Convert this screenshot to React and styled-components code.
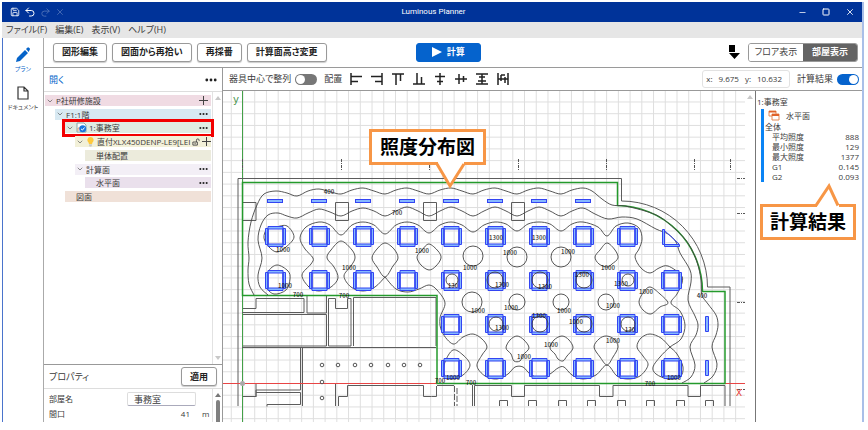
import React from "react";
import styled, { createGlobalStyle, css } from "styled-components";
import { Save, Undo2, Redo2, X, Minus, Square, ChevronDown } from "lucide-react";

const GlobalStyle = createGlobalStyle`
  * { box-sizing: border-box; }
  body {
    margin: 0;
    background: #fff;
    color: #3a3a3a;
    font-family: "Open Sans", "Noto Sans CJK JP", sans-serif;
    font-size: 9px;
    line-height: 12px;
    font-feature-settings: "palt";
  }
  button, input { font: inherit; color: inherit; font-feature-settings: inherit; }
`;

const Window = styled.div`
  display: flex;
  flex-direction: column;
  height: calc(100vh - 10px);
  margin: 2px 4px 8px 2px;
  overflow: hidden;
  border-right: 2px solid #a9bfe8;
`;

const TitleBar = styled.header`
  display: grid;
  grid-template-columns: 1fr auto 1fr;
  align-items: center;
  flex: none;
  height: 20px;
  padding: 0 4px 0 7px;
  background: #003399;
  color: #fff;
`;

const IconGroup = styled.div`
  display: flex;
  align-items: center;
  gap: ${(p) => p.$gap}px;
  justify-content: ${(p) => (p.$end ? "flex-end" : "flex-start")};
`;

const IconButton = styled.button`
  display: flex;
  align-items: center;
  justify-content: center;
  width: ${(p) => p.$w || 12}px;
  height: 14px;
  padding: 0;
  border: 0;
  background: none;
  color: inherit;
  opacity: ${(p) => (p.disabled ? 0.3 : 1)};
`;

const Title = styled.h1`
  margin: 0;
  font-family: Roboto, sans-serif;
  font-size: 8px;
  font-weight: 400;
`;

const MenuBar = styled.nav`
  display: flex;
  align-items: center;
  gap: 8px;
  flex: none;
  height: 16px;
  padding-left: 4px;
  background: #e6e6e6;
`;

const MenuItem = styled.button`
  padding: 0;
  border: 0;
  background: none;
  white-space: nowrap;
`;

const Body = styled.div`
  display: flex;
  flex: 1;
  min-height: 0;
  border-left: 1px solid #4a74cc;
`;

const Rail = styled.nav`
  display: flex;
  flex-direction: column;
  align-items: center;
  gap: 12px;
  flex: none;
  width: 40px;
  padding-top: 9px;
`;

const RailItem = styled.button`
  display: flex;
  flex-direction: column;
  align-items: center;
  gap: 3px;
  padding: 0;
  border: 0;
  background: none;
  color: ${(p) => (p.$active ? "#0563c9" : "#444")};
  font-size: 6px;
  line-height: 9px;
  white-space: nowrap;
`;

const Workspace = styled.div`
  display: flex;
  flex-direction: column;
  flex: 1;
  min-width: 0;
  border-left: 1px solid #aaa;
`;

const CommandBar = styled.div`
  display: flex;
  align-items: center;
  gap: 5px;
  flex: none;
  height: 30px;
  padding: 0 4px 1px 9px;
  border-bottom: 1px solid #9a9a9a;
`;

const Spacer = styled.div`
  flex: ${(p) => p.$grow || 1};
`;

const Button = styled.button`
  display: flex;
  align-items: center;
  justify-content: center;
  gap: 5px;
  height: 19px;
  padding: 0 8px;
  border: 1px solid #999;
  border-radius: 3px;
  background: #fff;
  box-shadow: 0 1px 1px #ccc;
  color: #222;
  font-weight: 600;
  white-space: nowrap;
  ${(p) =>
    p.$primary &&
    css`
      width: 65px;
      border-color: #0563cd;
      background: #0563cd;
      box-shadow: none;
      color: #fff;
    `}
`;

const Segments = styled.div`
  display: flex;
  height: 19px;
  margin-left: 3px;
  border: 1px solid #999;
  border-radius: 3px;
  overflow: hidden;
`;

const Segment = styled.button`
  width: 54px;
  padding: 0;
  border: 0;
  background: ${(p) => (p.$active ? "#646464" : "#fff")};
  color: ${(p) => (p.$active ? "#fff" : "#444")};
  font-weight: ${(p) => (p.$active ? 700 : 400)};
  white-space: nowrap;
`;

const Columns = styled.div`
  display: flex;
  flex: 1;
  min-height: 0;
`;

const SidePanel = styled.aside`
  display: flex;
  flex-direction: column;
  flex: none;
  width: 179px;
  border-right: 1px solid #999;
`;

const PanelHeader = styled.div`
  display: flex;
  align-items: center;
  justify-content: space-between;
  flex: none;
  height: ${(p) => p.$h}px;
  padding: 0 5px;
  border-bottom: 1px solid #ddd;
`;

const LinkButton = styled.button`
  padding: 0;
  border: 0;
  background: none;
  color: #0563c9;
`;

const Scroller = styled.div`
  display: flex;
  flex: ${(p) => (p.$grow ? 1 : "none")};
  min-height: 0;
`;

const ScrollTrack = styled.div`
  display: flex;
  flex-direction: column;
  align-items: center;
  flex: none;
  width: 10px;
  padding: 4px 0;
  border-left: ${(p) => (p.$plain ? "0" : "1px solid #e2e2e2")};
  color: ${(p) => (p.$dark ? "#777" : "#c8c8c8")};
`;

const Thumb = styled.div`
  flex: 1;
  width: 4px;
  margin: 3px 0 -4px;
  border-radius: 2px 2px 0 0;
  background: #808080;
`;

const Tree = styled.ul`
  display: grid;
  grid-template-columns: minmax(0, 1fr);
  align-content: space-between;
  flex: 1;
  min-width: 0;
  height: 107px;
  margin: 3px 1px 0;
  padding: 0;
  list-style: none;
`;

const TreeRow = styled.li`
  position: relative;
  display: flex;
  align-items: center;
  gap: 2px;
  height: 11px;
  margin-left: ${(p) => p.$depth * 10}px;
  padding: 0 3px 0 ${(p) => (p.$leaf ? 11 : 1)}px;
  background: ${(p) => p.$color};
  font-size: 8px;
  line-height: 11px;
  white-space: nowrap;
  svg { flex: none; }
`;

const TreeLabel = styled.span`
  flex: 1;
`;

const Highlight = styled.span`
  position: absolute;
  inset: -3px -3px -4px -3px;
  border: 3px solid #f20000;
`;

const Properties = styled.section`
  display: flex;
  flex-direction: column;
  flex: none;
  height: 58px;
  border-top: 1px solid #999;
`;

const Fields = styled.div`
  display: grid;
  grid-template-columns: 78px 69px 1fr;
  grid-auto-rows: 14px;
  gap: 1px 0;
  align-content: start;
  align-items: center;
  flex: 1;
  padding: 3px 0 0 5px;
  font-size: 8px;
`;

const Field = styled.input`
  width: 69px;
  height: 14px;
  padding: 0 6px;
  border: 1px solid #ddd;
  border-bottom-color: #aab;
  border-radius: 2px;
  background: #fff;
  font-size: 9px;
`;

const NumberField = styled.input`
  width: 69px;
  padding: 0 6px;
  border: 0;
  background: none;
  text-align: right;
`;

const Unit = styled.span`
  padding-left: 6px;
`;

const Main = styled.main`
  display: flex;
  flex-direction: column;
  flex: 1;
  min-width: 0;
`;

const ViewBar = styled.div`
  display: flex;
  align-items: center;
  gap: 7px;
  flex: none;
  height: 23px;
  padding: 0 3px 0 6px;
  border-bottom: 1px solid #999;
  white-space: nowrap;
`;

const SwitchLabel = styled.label`
  display: flex;
  align-items: center;
  gap: 4px;
`;

const Switch = styled.input`
  appearance: none;
  width: 22px;
  height: 11px;
  margin: 0;
  border-radius: 6px;
  background: ${(p) => (p.$on ? "#0563cd" : "#777")};
  &::after {
    content: "";
    display: block;
    width: 9px;
    height: 9px;
    margin: 1px 1px 1px ${(p) => (p.$on ? 12 : 1)}px;
    border-radius: 50%;
    background: #fff;
  }
`;

const AlignTools = styled.div`
  display: flex;
  gap: 9px;
  padding-left: 1px;
`;

const Coordinates = styled.output`
  display: flex;
  align-items: center;
  justify-content: flex-end;
  gap: 6px;
  width: 88px;
  height: 18px;
  padding: 0 7px;
  border: 1px solid #e2e2e2;
  border-radius: 3px;
  font-size: 8px;
`;

const Canvas = styled.div`
  position: relative;
  display: flex;
  flex: 1;
  min-width: 0;
`;

const Plan = styled.svg`
  flex: 1;
  min-width: 0;
  height: 100%;
`;

const LevelLabels = styled.g`
  fill: #111;
  font-family: "Noto Sans CJK JP", sans-serif;
  font-feature-settings: "hwid";
  font-size: 7px;
  text-anchor: middle;
`;

const Results = styled.aside`
  position: relative;
  flex: none;
  width: 107px;
  padding: 6px 3px 0 1px;
  border-left: 1px solid #777;
  font-size: 8px;
  line-height: 10px;
`;

const ResultCard = styled.div`
  margin: 2px 0 0 4px;
  border-left: 3px solid #0a84f5;
`;

const ResultTitle = styled.div`
  display: flex;
  align-items: center;
  gap: 6px;
  height: 13px;
  padding-left: 4px;
`;

const ResultTable = styled.table`
  width: 100%;
  border-collapse: collapse;
  caption { padding: 0 0 0 1px; text-align: left; }
  th { padding: 0 0 0 8px; text-align: left; font-weight: 400; }
  td { padding: 0; text-align: right; }
`;

const Callout = styled.div`
  position: absolute;
  top: ${(p) => p.$top}px;
  left: ${(p) => p.$left}px;
  width: ${(p) => p.$w}px;
  height: 36px;
  border: 3px solid #f79646;
  background: #fff;
  color: #000;
  font-size: 19px;
  font-weight: 700;
  line-height: 30px;
  text-align: center;
  white-space: nowrap;
`;

const Tail = styled.svg`
  position: absolute;
  left: ${(p) => p.$left}px;
  ${(p) => (p.$up ? "bottom: 30px;" : "top: 30px;")}
`;

function Caret({ down }) {
  return (
    <svg width="6" height="4" viewBox="0 0 6 4">
      <path d={down ? "M0 0h6L3 4z" : "M0 4h6L3 0z"} fill="currentColor" />
    </svg>
  );
}

function Dots({ size = 10 }) {
  return (
    <svg width={size} height="4" viewBox="0 0 12 4" fill="#222">
      <circle cx="1.8" cy="2" r="1.4" />
      <circle cx="6" cy="2" r="1.4" />
      <circle cx="10.2" cy="2" r="1.4" />
    </svg>
  );
}

const Plus = () => (
  <svg width="9" height="9" viewBox="0 0 9 9">
    <path d="M4.500 0v9M0 4.500h9" stroke="#444" />
  </svg>
);

const RoomIcon = () => (
  <svg width="11" height="11" viewBox="0 0 11 11">
    <path d="M1 1h7l2 2v7H1z" fill="#fff" stroke="#8aa" />
    <path d="M2 9V6h3" fill="none" stroke="#e89a70" />
    <circle cx="6.7" cy="6.7" r="3.5" fill="#1976dd" />
    <path d="M5 6.8l1.4 1.3L8.5 5.5" fill="none" stroke="#fff" />
  </svg>
);

const BulbIcon = () => (
  <svg width="9" height="11" viewBox="0 0 9 11">
    <path d="M4.500 1a3.200 3.200 0 0 0-1.700 5.900V8h3.400V6.900A3.200 3.200 0 0 0 4.500 1z" fill="#ffc93c" />
    <path d="M3 9h3M3.500 10h2" stroke="#bbb" />
  </svg>
);

const LockIcon = () => (
  <svg width="8" height="8" viewBox="0 0 9 9" fill="none" stroke="#444">
    <path d="M1 4.500h5v3.500H1zM5 4.500V2.500a1.500 1.500 0 0 1 3 0v1M3.500 5.500v1.500" />
  </svg>
);

const alignIcons = [
  ["左揃え", "M1 0v12M1 3.500h11M1 8.500h7"],
  ["右揃え", "M11 0v12M0 3.500h11M4 8.500h7"],
  ["上揃え", "M0 1h12M4 1v11M8.500 1v7"],
  ["下揃え", "M0 11h12M4 0v11M8.500 4v7"],
  ["左右中央", "M6 0v12M1 3.500h10M3 8.500h6"],
  ["上下中央", "M0 6h12M4 1v10M8.500 3v6"],
  ["上下均等", "M0 1h12M0 11h12M6 1v10M3 4h6M2 8h8"],
  ["左右均等", "M1 0v12M11 0v12M1 6h10M4 2v6M8 4v6M4 2h4"],
];

const treeData = [
  { depth: 0, label: "P社研修施設", color: "#f0dbe3", end: "plus" },
  { depth: 1, label: "F1:1階", color: "#d8e9f2", end: "dots" },
  { depth: 2, label: "1:事務室", color: "#e0ece2", end: "dots", icon: <RoomIcon />, marked: true },
  { depth: 3, label: "直付XLX450DENP-LE9[LEI", color: "#f2f0d8", end: "plus", icon: <BulbIcon />, lock: true },
  { depth: 4, label: "単体配置", color: "#ecebdc", leaf: true },
  { depth: 3, label: "計算面", color: "#f3eff6", end: "dots" },
  { depth: 4, label: "水平面", color: "#eae0ec", leaf: true, end: "dots" },
  { depth: 2, label: "図面", color: "#f0e1d8", leaf: true },
];

const results = [
  ["平均照度", "888"],
  ["最小照度", "129"],
  ["最大照度", "1377"],
  ["G1", "0.145"],
  ["G2", "0.093"],
];

const xs = [275, 319, 363, 407, 451, 495, 539, 583, 627, 671];
const fixtures = [
  ...xs.slice(0, 9).map((x) => [x, 236]),
  ...xs.map((x) => [x, 280]),
  ...xs.slice(4).map((x) => [x, 324]),
  ...xs.slice(4).map((x) => [x, 368]),
];

const labels = [
  ["400", 329, 191], ["700", 397, 212], ["1000", 283, 249], ["1000", 349, 267],
  ["1000", 422, 250], ["1300", 496, 237], ["1300", 539, 237], ["1000", 510, 252],
  ["1000", 568, 251], ["1000", 470, 267], ["1300", 582, 274], ["1000", 608, 267],
  ["1000", 285, 285], ["700", 298, 294], ["700", 344, 295], ["130", 453, 285],
  ["1300", 502, 284], ["1300", 545, 286], ["1300", 621, 283], ["1000", 646, 291],
  ["1000", 478, 310], ["1000", 511, 307], ["1000", 564, 310], ["1000", 613, 305],
  ["1300", 502, 327], ["1300", 539, 315], ["1000", 576, 321], ["130", 630, 329],
  ["1000", 524, 356], ["1000", 551, 344], ["1000", 613, 340], ["400", 702, 295],
  ["1000", 453, 377], ["700", 440, 380], ["700", 471, 382], ["700", 650, 383],
  ["1000", 674, 377],
];

const rings = [
  [473, 256, 10], [517, 257, 10], [561, 257, 10],
  [472, 302, 10], [517, 302, 8], [561, 302, 8], [606, 302, 8],
  [452, 280, 6], [495, 280, 8], [540, 280, 8], [584, 280, 8], [628, 280, 6],
  [496, 324, 7], [540, 324, 8], [584, 324, 8], [628, 324, 7],
];

/* Smooth closed or open curve through a list of points. */
function smooth(text, closed) {
  const pts = text.split(" ").map((p) => p.split(",").map(Number));
  const n = pts.length;
  const at = (i) => (closed ? pts[(i + n) % n] : pts[Math.max(0, Math.min(n - 1, i))]);
  let d = `M${pts[0]}`;
  for (let i = 0; i < (closed ? n : n - 1); i++) {
    const [a, b, c, e] = [at(i - 1), at(i), at(i + 1), at(i + 2)];
    d += `C${b[0] + (c[0] - a[0]) / 6},${b[1] + (c[1] - a[1]) / 6} ${c[0] - (e[0] - b[0]) / 6},${c[1] - (e[1] - b[1]) / 6} ${c}`;
  }
  return d;
}

const openContours = [
  "254,295 249,284 248,270 249,258 248,242 251,222 257,205 264,194 276,191 287,193 297,196 308,191 319,189 331,192 341,194 352,190 363,188 374,191 385,194 396,190 407,188 418,191 429,194 440,190 451,188 462,191 473,194 484,190 495,188 506,191 517,194 528,190 539,188 550,191 561,194 572,190 583,188 592,191 602,199 612,205 625,206 645,211 660,217 675,229 688,243 697,262 701,280 702,295 708,304 716,315 718,325 716,335 712,347 717,364 713,376 704,383",
  "268,295 260,287 258,275 262,258 258,240 261,225 268,215 278,213 287,216 297,218 308,213 319,209 330,212 341,216 352,211 363,208 374,211 385,216 396,211 407,207 418,211 429,216 440,211 451,207 462,211 473,216 484,211 495,207 506,211 517,216 528,211 539,207 550,211 561,216 572,211 583,208 595,214 608,219 622,217 637,219 656,229 668,234 676,242 680,253 690,270 691,282 688,300 695,316 698,325 696,335 690,347 695,365 691,377 682,383",
  "385,277 396,289 408,292 419,289 429,285 437,290 445,303 440,318 442,332 453,344 463,337 473,334 482,339 487,347 482,355 477,366 485,376 497,379 508,374 515,367 523,367 530,374 540,378 550,374 558,368 564,367 572,375 583,379 596,375 607,365 617,376 628,379 640,376 648,365 643,356 637,347 641,338 650,334 661,338 670,347 677,354 683,367 680,377 668,379 656,374 653,367 660,357 670,347 681,339 685,325 680,311 671,303 677,294 682,283 681,275 668,266 659,268 650,273 641,268 635,257 639,249 642,239 639,228 628,223 616,226 607,236 598,227 583,222 572,224 561,231 550,224 539,222 528,224 517,231 506,224 495,222 484,225 473,232 462,225 451,222 440,225 429,233 418,225 407,222 396,225 385,234 374,225 363,222 352,225 341,235 330,225 319,222 306,227 300,238 305,249 313,258 311,264 302,275 309,287 319,291 331,287 338,278 334,267 327,258 331,250 341,241 352,250 355,258 351,266 344,276 351,287 363,291 375,287 385,277",
];

const closedContours = [
  "267,229 276,227 287,226 294,237 286,247 277,252 269,247 264,238",
  "277,265 288,271 290,279 286,290 274,294 266,286 268,272",
  "385,243 394,249 398,258 393,266 385,277 377,267 372,258 377,249",
  "429,244 438,251 441,258 436,266 429,270 421,265 417,257 422,250",
  "607,243 615,250 618,258 612,264 607,267 599,264 595,257 600,250",
  "650,287 660,294 668,303 660,307 651,314 643,310 639,302 643,293",
  "517,336 524,340 529,348 523,355 520,361 514,361 511,354 506,348 510,340",
  "562,336 569,340 573,348 567,356 563,361 558,359 555,354 550,348 554,340",
  "606,336 614,339 618,347 613,357 607,365 600,357 594,347 599,339",
  "453,350 463,355 470,365 463,375 451,379 444,374 445,362",
];

const walls = `M238 406V178.500H621.500V201A86 86 0 0 1 707.500 287H730V406
M243 202.500h13v18h-13M335.500 202.500h13v18h-13zM423.500 202.500h13v18h-13zM511.500 202.500h13v18h-13z
M243 308.500h13v-10h48v14H242M307 296v17h19.500V296M243 314.500h83.500V346H243
M328.500 298.500h7v10h12v-10h3.500V346h-22.500zM353.500 346V297.500H436V346M242 347.500h194
M300.500 347.500V390H256M302.500 347.500V406M242 383.500h14v13h-13M256 392.500h44.500v12H267v2M256 390v7
M335.500 406V383.500H437M338.500 406v-9.500h9v-11h76v11h8M436.500 386v10.500h-5M437 385.500h17M472.500 385v21M474.500 406V385.500h37v11h13v-11h75v11h13.500v-11h75v11h12.500v-11h24.500V406`;

const roomOutline = "M242.500 182.500H617.500V205.500A86 86 0 0 1 702.500 291.500H725V383.500H437V295.500H242.500z";

function FloorPlan() {
  return (
    <Plan role="img" aria-label="照度分布図">
      <defs>
        <pattern id="grid" x="242.500" y="383" width="11.730" height="11.730" patternUnits="userSpaceOnUse">
          <path d="M0 .5H12M.5 0V12" stroke="#dedede" fill="none" />
        </pattern>
      </defs>
      <g transform="translate(-223 -91)" fill="none">
        <rect x="223" y="91" width="522" height="331" fill="url(#grid)" />
        <path d="M242.500 91V422" stroke="#43a047" />
        <path d={walls} stroke="#5c5c5c" />
        <path d="M223 383.500H745" stroke="#e84545" />
        {[499, 528, 558, 587, 617, 646, 676, 705].map((x) => (
          <path key={x} d={`M${x + 0.5} 406v-5.500h8v5.500`} stroke="#5c5c5c" />
        ))}
        <path d="M454.500 386v20M457 388v18" stroke="#5c5c5c" strokeDasharray="6 2" />
        {[242, 341, 429, 518, 606, 694, 730].map((x) => (
          <path key={x} d={`M${x}.5 159v12`} stroke="#555" strokeDasharray="3 1 1 1" />
        ))}
        {[178, 213, 302, 389].map((y) => (
          <path key={y} d={`M737 ${y}.5h8`} stroke="#555" strokeDasharray="3 1 1 1" />
        ))}
        {[[322, 365], [338, 365], [355, 365], [371, 365], [388, 365], [404, 365], [420, 365], [322, 382], [322, 398]].map(([x, y]) => (
          <circle key={`${x}-${y}`} cx={x} cy={y} r="1.800" stroke="#555" />
        ))}
        <path d={roomOutline} stroke="#249a2c" strokeWidth="1.500" />
        <g stroke="#444" strokeWidth="0.900">
          {openContours.map((c) => <path key={c} d={smooth(c, false)} />)}
          {closedContours.map((c) => <path key={c} d={smooth(c, true)} />)}
        </g>
        <g stroke="#3344f2" fill="#86b8ff">
          {fixtures.map(([x, y]) => (
            <g key={`${x}-${y}`}>
              <path fillRule="evenodd" d={`M${x - 9.5} ${y - 7.5}h20v16h-20zM${x - 7} ${y - 7.5}v16h15v-16z`} />
              <path fillRule="evenodd" d={`M${x - 7} ${y - 9.5}h15v20h-15zM${x - 7} ${y - 7}h15v15h-15z`} />
            </g>
          ))}
          {xs.slice(0, 8).map((x) => (
            <rect key={x} x={x - 7.5} y="199.500" width="15" height="3" />
          ))}
          <path d="M705.500 316.500h3v15h-3zM705.500 360.500h3v15h-3zM662.500 229.500h2v15h-2zM664.500 244.500h15v2h-15zM664 230l15 14" />
        </g>
        <g stroke="#444" strokeWidth="0.900">
          {rings.map(([x, y, r]) => <circle key={`${x}-${y}`} cx={x} cy={y} r={r} />)}
        </g>
        <LevelLabels>
          {labels.map(([t, x, y]) => (
            <text key={`${x}-${y}`} x={x} y={y + 3}>{t}</text>
          ))}
        </LevelLabels>
        <circle cx="242.500" cy="383.500" r="2.500" fill="#aaa" />
        <g fontFamily='"Liberation Mono", monospace' fontSize="10">
          <text x="233" y="103" fill="#388e3c">y</text>
          <text x="736" y="396" fill="#e53935">X</text>
        </g>
      </g>
    </Plan>
  );
}

export default function App() {
  return (
    <>
      <GlobalStyle />
      <Window>
        <TitleBar>
          <IconGroup $gap={3}>
            <IconButton aria-label="保存"><Save size={10} /></IconButton>
            <IconButton aria-label="元に戻す"><Undo2 size={12} /></IconButton>
            <IconButton aria-label="やり直し" disabled><Redo2 size={11} /></IconButton>
            <IconButton aria-label="取消" disabled><X size={10} /></IconButton>
          </IconGroup>
          <Title>Luminous Planner</Title>
          <IconGroup $gap={8} $end>
            <IconButton $w={16} aria-label="最小化"><Minus size={9} /></IconButton>
            <IconButton $w={16} aria-label="最大化"><Square size={8} strokeWidth={3} /></IconButton>
            <IconButton $w={16} aria-label="閉じる"><X size={10} /></IconButton>
          </IconGroup>
        </TitleBar>
        <MenuBar>
          {["ファイル(F)", "編集(E)", "表示(V)", "ヘルプ(H)"].map((m) => <MenuItem key={m}>{m}</MenuItem>)}
        </MenuBar>
        <Body>
          <Rail>
            <RailItem $active>
              <svg width="14" height="15" viewBox="0 0 14 15" fill="currentColor">
                <path d="M0 15l1-4 8-8 3 3-8 8zM10 2l1.300-1.300a1.200 1.200 0 0 1 1.700 0l.6.6a1.200 1.200 0 0 1 0 1.700L12.700 5z" />
              </svg>
              プラン
            </RailItem>
            <RailItem>
              <svg width="12" height="14" viewBox="0 0 12 14" fill="none" stroke="#333" strokeWidth="1.200">
                <path d="M1 1h6l4 4v8H1zM7 1v4h4" />
              </svg>
              ドキュメント
            </RailItem>
          </Rail>
          <Workspace>
            <CommandBar>
              <Button>図形編集</Button>
              <Button>図面から再拾い</Button>
              <Button>再採番</Button>
              <Button>計算面高さ変更</Button>
              <Spacer $grow={2} />
              <Button $primary>
                <svg width="10" height="10" viewBox="0 0 10 10"><path d="M0 0l10 5-10 5z" fill="#fff" /></svg>
                計算
              </Button>
              <Spacer $grow={6} />
              <svg width="12" height="14" viewBox="0 0 12 14"><path d="M1 0h6v7H1zM1 8h11L6.500 14z" /></svg>
              <Segments>
                <Segment>フロア表示</Segment>
                <Segment $active>部屋表示</Segment>
              </Segments>
            </CommandBar>
            <Columns>
              <SidePanel>
                <PanelHeader $h={24}>
                  <LinkButton>開く</LinkButton>
                  <IconButton aria-label="その他"><Dots size={12} /></IconButton>
                </PanelHeader>
                <Scroller $grow>
                  <Tree>
                    {treeData.map((r) => (
                      <TreeRow key={r.label} $depth={r.depth} $color={r.color} $leaf={r.leaf}>
                        {!r.leaf && <ChevronDown size={8} color="#555" />}
                        {r.icon}
                        <TreeLabel>{r.label}</TreeLabel>
                        {r.lock && <LockIcon />}
                        {r.end === "plus" && <Plus />}
                        {r.end === "dots" && <Dots size={9} />}
                        {r.marked && <Highlight />}
                      </TreeRow>
                    ))}
                  </Tree>
                  <ScrollTrack>
                    <Caret />
                    <Spacer />
                    <Caret down />
                  </ScrollTrack>
                </Scroller>
                <Properties>
                  <PanelHeader $h={24}>
                    プロパティ
                    <Button>適用</Button>
                  </PanelHeader>
                  <Scroller $grow>
                    <Fields>
                      <label htmlFor="room">部屋名</label>
                      <Field id="room" defaultValue="事務室" />
                      <span />
                      <label htmlFor="width">間口</label>
                      <NumberField id="width" defaultValue="41" />
                      <Unit>m</Unit>
                    </Fields>
                    <ScrollTrack $dark>
                      <Caret />
                      <Thumb />
                    </ScrollTrack>
                  </Scroller>
                </Properties>
              </SidePanel>
              <Main>
                <ViewBar>
                  <SwitchLabel>器具中心で整列<Switch type="checkbox" /></SwitchLabel>
                  <span>配置</span>
                  <AlignTools>
                    {alignIcons.map(([name, d]) => (
                      <IconButton key={name} aria-label={name}>
                        <svg width="12" height="12" viewBox="0 0 12 12">
                          <path d={d} stroke="#222" strokeWidth="1.500" fill="none" />
                        </svg>
                      </IconButton>
                    ))}
                  </AlignTools>
                  <Spacer />
                  <Coordinates><span>x:</span><span>9.675</span><span>y:</span><span>10.632</span></Coordinates>
                  <SwitchLabel>計算結果<Switch type="checkbox" defaultChecked $on /></SwitchLabel>
                </ViewBar>
                <Columns>
                  <Canvas>
                    <FloorPlan />
                    <ScrollTrack $plain><Caret /></ScrollTrack>
                    <Callout $top={38} $left={146} $w={117}>
                      照度分布図
                      <Tail $left={64} width="30" height="27" viewBox="0 0 30 27">
                        <path d="M2 0h26v3L15 24 2 3z" fill="#fff" />
                        <path d="M1 2L14 24 28 2" fill="none" stroke="#f79646" strokeWidth="3" />
                      </Tail>
                    </Callout>
                  </Canvas>
                  <Results>
                    1:事務室
                    <ResultCard>
                      <ResultTitle>
                        <svg width="12" height="11" viewBox="0 0 12 11">
                          <path d="M1 1h7v5H1z" fill="#fff" stroke="#e58a55" />
                          <path d="M1 1h7v1.500H1z" fill="#e0622a" />
                          <path d="M4 4h7v6H4z" fill="#fff" stroke="#e58a55" />
                          <path d="M4 4h7v2H4z" fill="#e0622a" />
                        </svg>
                        水平面
                      </ResultTitle>
                      <ResultTable>
                        <caption>全体</caption>
                        <tbody>
                          {results.map(([k, v]) => <tr key={k}><th scope="row">{k}</th><td>{v}</td></tr>)}
                        </tbody>
                      </ResultTable>
                    </ResultCard>
                    <Callout $top={113} $left={4} $w={96}>
                      計算結果
                      <Tail $up $left={52} width="30" height="24" viewBox="0 0 30 24">
                        <path d="M2 24v-3L15 3l9 18v3z" fill="#fff" />
                        <path d="M1 22.500L14 3l9 19.500" fill="none" stroke="#f79646" strokeWidth="3" />
                      </Tail>
                    </Callout>
                  </Results>
                </Columns>
              </Main>
            </Columns>
          </Workspace>
        </Body>
      </Window>
    </>
  );
}
